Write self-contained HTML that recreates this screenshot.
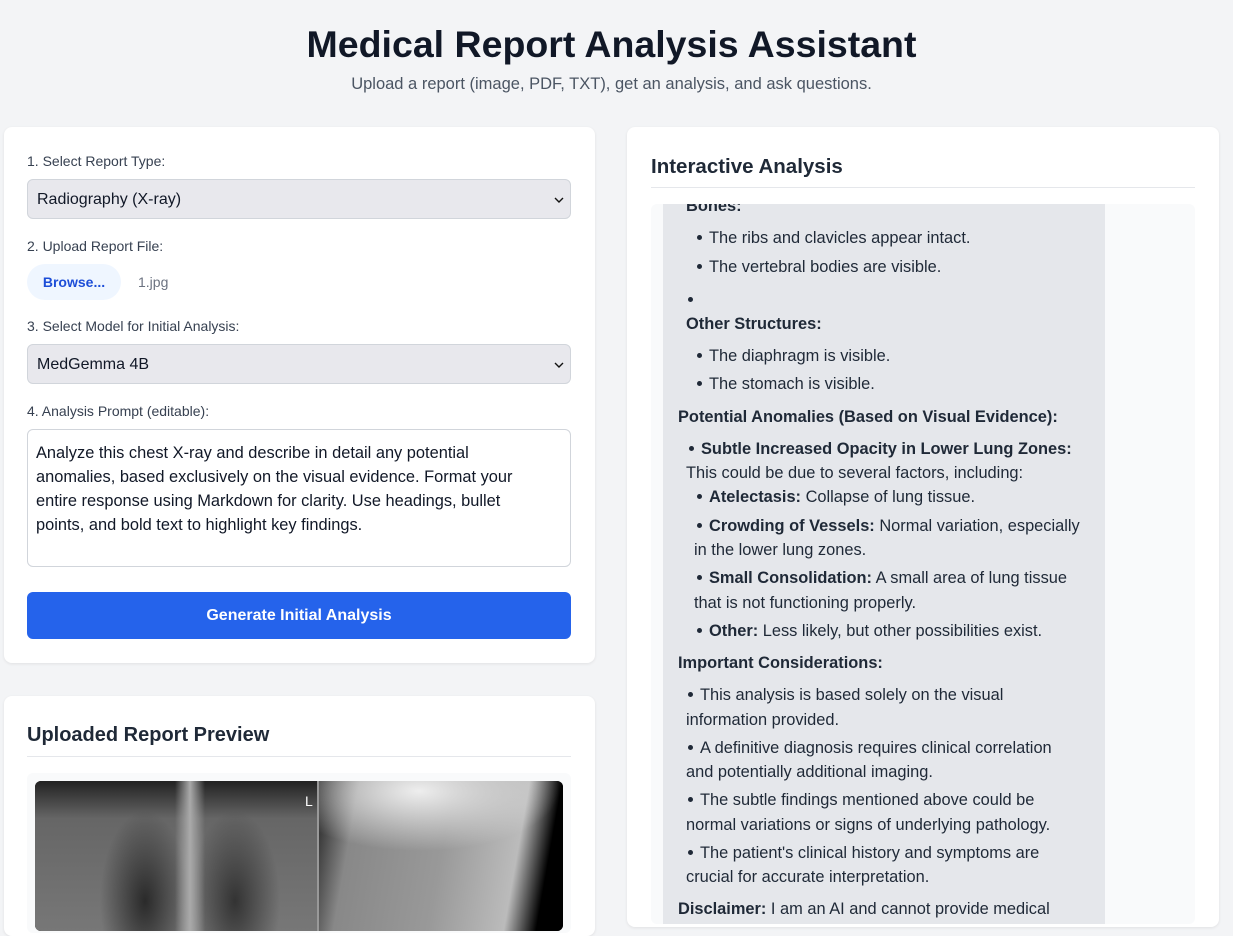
<!DOCTYPE html>
<html><head><meta charset="utf-8"><style>
*{margin:0;padding:0;box-sizing:border-box}
body{width:1233px;height:919px;overflow:hidden;background:#f3f4f6;font-family:"Liberation Sans",sans-serif;color:#1f2937;position:relative}
.a{position:absolute;white-space:nowrap}
.card{position:absolute;background:#fff;border-radius:8px;box-shadow:0 1px 3px rgba(0,0,0,.08)}
.lbl{font-size:14px;color:#374151}
.sel{position:absolute;left:27px;width:544px;height:40px;background:#e8e8ed;border:1px solid #d1d5db;border-radius:6px;font-size:16px;color:#111827;padding:11px 9px}
.sel svg{position:absolute;right:6px;top:16px}
.t{position:absolute;white-space:nowrap;font-size:16.4px;line-height:22px;color:#1f2937}
b{font-weight:bold;color:#1f2937}
.dot{position:absolute;width:5px;height:5px;border-radius:50%;background:#1f2937}
</style></head><body>
<div class="a" style="left:0;width:1223px;text-align:center;top:23px;font-size:37.5px;font-weight:bold;color:#111827">Medical Report Analysis Assistant</div>
<div class="a" style="left:0;width:1223px;text-align:center;top:75px;font-size:16.5px;color:#4b5563">Upload a report (image, PDF, TXT), get an analysis, and ask questions.</div>

<div class="card" style="left:4px;top:127px;width:591px;height:536px"></div>
<div class="a lbl" style="left:27px;top:153px">1. Select Report Type:</div>
<div class="sel" style="top:179px">Radiography (X-ray)<svg width="10" height="8"><path d="M1 2l4 4 4-4" stroke="#111" stroke-width="1.4" fill="none"/></svg></div>
<div class="a lbl" style="left:27px;top:238px">2. Upload Report File:</div>
<div class="a" style="left:27px;top:264px;width:94px;height:36px;border-radius:18px;background:#eff6ff;color:#1d4ed8;font-weight:bold;font-size:14px;text-align:center;line-height:36px">Browse...</div>
<div class="a" style="left:138px;top:274px;font-size:14px;color:#6b7280">1.jpg</div>
<div class="a lbl" style="left:27px;top:318px">3. Select Model for Initial Analysis:</div>
<div class="sel" style="top:344px">MedGemma 4B<svg width="10" height="8"><path d="M1 2l4 4 4-4" stroke="#111" stroke-width="1.4" fill="none"/></svg></div>
<div class="a lbl" style="left:27px;top:403px">4. Analysis Prompt (editable):</div>
<div class="a" style="left:27px;top:429px;width:544px;height:138px;border:1px solid #d1d5db;border-radius:6px;padding:11px 8px;font-size:16.4px;line-height:24px;color:#111827;white-space:normal">Analyze this chest X-ray and describe in detail any potential<br>anomalies, based exclusively on the visual evidence. Format your<br>entire response using Markdown for clarity. Use headings, bullet<br>points, and bold text to highlight key findings.</div>
<div class="a" style="left:27px;top:592px;width:544px;height:47px;background:#2563eb;border-radius:6px;color:#fff;font-weight:bold;font-size:16px;text-align:center;line-height:48px">Generate Initial Analysis</div>

<div class="card" style="left:4px;top:696px;width:591px;height:240px"></div>
<div class="a" style="left:27px;top:724px;font-size:20px;font-weight:bold;color:#1f2937">Uploaded Report Preview</div>
<div class="a" style="left:27px;top:756px;width:544px;height:1px;background:#e5e7eb"></div>
<div class="a" style="left:27px;top:773px;width:544px;height:160px;background:#f9fafb;border-radius:6px"></div>
<div class="a" style="left:35px;top:781px;width:528px;height:150px;border-radius:6px;overflow:hidden;background:#000">
 <div style="position:absolute;left:0;top:0;width:282px;height:150px;background:radial-gradient(ellipse 45px 90px at 110px 120px,#2a2a2a,transparent),radial-gradient(ellipse 45px 90px at 200px 120px,#333,transparent),linear-gradient(180deg,#222 0%,#666 25%,#777 100%)"></div>
 <div style="position:absolute;left:140px;top:0;width:30px;height:150px;background:linear-gradient(90deg,transparent,#aaa,transparent)"></div>
 <div style="position:absolute;left:282px;top:0;width:2px;height:150px;background:#999"></div>
 <div style="position:absolute;left:284px;top:0;width:244px;height:150px;background:radial-gradient(ellipse 140px 60px at 100px 10px,#eee,transparent),linear-gradient(100deg,#222 0%,#888 15%,#999 50%,#bbb 78%,#000 90%)"></div>
 <div style="position:absolute;left:270px;top:12px;color:#fff;font-size:14px">L</div>
</div>

<div class="card" style="left:627px;top:127px;width:592px;height:800px"></div>
<div class="a" style="left:651px;top:155px;font-size:20.5px;font-weight:bold;color:#1f2937">Interactive Analysis</div>
<div class="a" style="left:651px;top:187px;width:544px;height:1px;background:#e5e7eb"></div>
<div class="a" style="left:651px;top:204px;width:544px;height:720px;background:#f9fafb;border-radius:6px"></div>
<div class="a" style="left:663px;top:204px;width:442px;height:720px;background:#e5e7eb;overflow:hidden">
<div class="t" style="left:23px;top:-9px;font-weight:bold">Bones:</div>
<div class="dot" style="left:34px;top:31px"></div><div class="t" style="left:46px;top:23px">The ribs and clavicles appear intact.</div>
<div class="dot" style="left:34px;top:60px"></div><div class="t" style="left:46px;top:52px">The vertebral bodies are visible.</div>
<div class="dot" style="left:25px;top:93px"></div>
<div class="t" style="left:23px;top:109px;font-weight:bold">Other Structures:</div>
<div class="dot" style="left:34px;top:149px"></div><div class="t" style="left:46px;top:141px">The diaphragm is visible.</div>
<div class="dot" style="left:34px;top:177px"></div><div class="t" style="left:46px;top:169px">The stomach is visible.</div>
<div class="t" style="left:15px;top:202px;font-weight:bold">Potential Anomalies (Based on Visual Evidence):</div>
<div class="dot" style="left:26px;top:242px"></div><div class="t" style="left:38px;top:234px;font-weight:bold">Subtle Increased Opacity in Lower Lung Zones:</div>
<div class="t" style="left:23px;top:258px">This could be due to several factors, including:</div>
<div class="dot" style="left:34px;top:290px"></div><div class="t" style="left:46px;top:282px"><b>Atelectasis:</b> Collapse of lung tissue.</div>
<div class="dot" style="left:34px;top:319px"></div><div class="t" style="left:46px;top:311px"><b>Crowding of Vessels:</b> Normal variation, especially</div>
<div class="t" style="left:31px;top:335px">in the lower lung zones.</div>
<div class="dot" style="left:34px;top:371px"></div><div class="t" style="left:46px;top:363px"><b>Small Consolidation:</b> A small area of lung tissue</div>
<div class="t" style="left:31px;top:388px">that is not functioning properly.</div>
<div class="dot" style="left:34px;top:424px"></div><div class="t" style="left:46px;top:416px"><b>Other:</b> Less likely, but other possibilities exist.</div>
<div class="t" style="left:15px;top:448px;font-weight:bold">Important Considerations:</div>
<div class="dot" style="left:25px;top:488px"></div><div class="t" style="left:37px;top:480px">This analysis is based solely on the visual</div>
<div class="t" style="left:23px;top:505px">information provided.</div>
<div class="dot" style="left:25px;top:541px"></div><div class="t" style="left:37px;top:533px">A definitive diagnosis requires clinical correlation</div>
<div class="t" style="left:23px;top:557px">and potentially additional imaging.</div>
<div class="dot" style="left:25px;top:593px"></div><div class="t" style="left:37px;top:585px">The subtle findings mentioned above could be</div>
<div class="t" style="left:23px;top:610px">normal variations or signs of underlying pathology.</div>
<div class="dot" style="left:25px;top:646px"></div><div class="t" style="left:37px;top:638px">The patient's clinical history and symptoms are</div>
<div class="t" style="left:23px;top:662px">crucial for accurate interpretation.</div>
<div class="t" style="left:15px;top:694px"><b>Disclaimer:</b> I am an AI and cannot provide medical</div>
</div>
</body></html>
